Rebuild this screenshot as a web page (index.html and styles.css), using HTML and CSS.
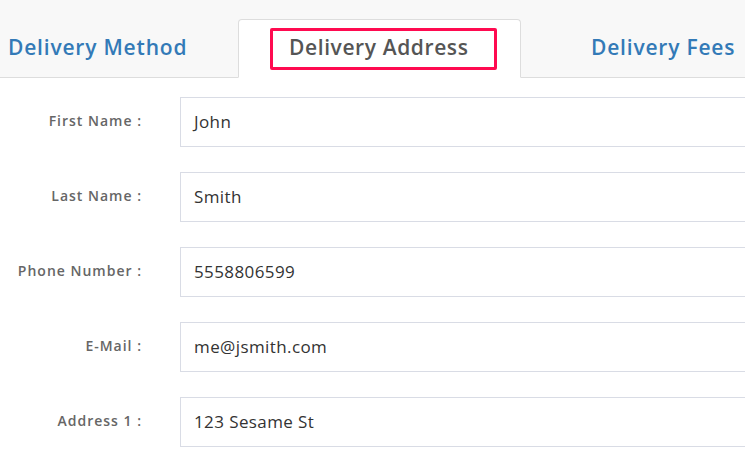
FILE: index.html
```html
<!DOCTYPE html>
<html>
<head>
<meta charset="utf-8">
<link rel="stylesheet" href="styles.css">
</head>
<body>
<div class="tabs">
  <div class="tab tab-method"><span class="tab-link">Delivery Method</span></div>
  <div class="tab tab-active"><span class="tab-label">Delivery Address</span></div>
  <div class="tab tab-fees"><span class="tab-link">Delivery Fees</span></div>
</div>
<form class="form">
  <div class="row"><label class="label">First Name :</label><div class="input">John</div></div>
  <div class="row"><label class="label">Last Name :</label><div class="input">Smith</div></div>
  <div class="row"><label class="label">Phone Number :</label><div class="input">5558806599</div></div>
  <div class="row"><label class="label">E-Mail :</label><div class="input">me@jsmith.com</div></div>
  <div class="row"><label class="label">Address 1 :</label><div class="input">123 Sesame St</div></div>
</form>
</body>
</html>
```
FILE: styles.css
```css
html, body {
  margin: 0;
  padding: 0;
  background: #ffffff;
  overflow: hidden;
}
body {
  width: 745px;
  height: 464px;
  font-family: "Open Sans", "Noto Sans", sans-serif;
}
.tabs {
  display: flex;
  height: 77px;
  background: #f8f8f8;
  border-bottom: 1px solid #dddddd;
  align-items: flex-end;
}
.tab {
  height: 58px;
  display: flex;
  align-items: center;
  box-sizing: border-box;
  margin-bottom: -1px;
  padding-bottom: 4px;
}
.tab-method {
  width: 238px;
  padding-left: 8px;
}
.tab-fees {
  flex: 1;
  padding-left: 70px;
}
.tab-link {
  font-size: 21px;
  font-weight: 600;
  color: #337ab7;
  letter-spacing: 0.8px;
}
.tab-active {
  width: 283px;
  height: 59px;
  background: #ffffff;
  border: 1px solid #dddddd;
  border-bottom-color: #ffffff;
  border-radius: 4px 4px 0 0;
  padding-left: 31px;
  padding-bottom: 0;
}
.tab-label {
  display: flex;
  align-items: center;
  width: 227px;
  height: 42px;
  box-sizing: border-box;
  border: 3px solid #ff0a50;
  border-radius: 2px;
  padding-left: 16px;
  padding-bottom: 4px;
  font-size: 21px;
  font-weight: 600;
  color: #555555;
  letter-spacing: 0.6px;
}
.form {
  display: flex;
  flex-direction: column;
  gap: 25px;
  padding-top: 19px;
}
.row {
  display: flex;
  align-items: center;
  gap: 38px;
}
.label {
  width: 142px;
  text-align: right;
  font-size: 14px;
  font-weight: 600;
  color: #666666;
  letter-spacing: 1px;
  padding-bottom: 3px;
}
.input {
  flex: 1;
  height: 50px;
  box-sizing: border-box;
  border: 1px solid #d9dce5;
  border-right: none;
  display: flex;
  align-items: center;
  padding-left: 13px;
  padding-bottom: 1px;
  font-size: 17px;
  color: #333333;
  letter-spacing: 0.4px;
}
```
